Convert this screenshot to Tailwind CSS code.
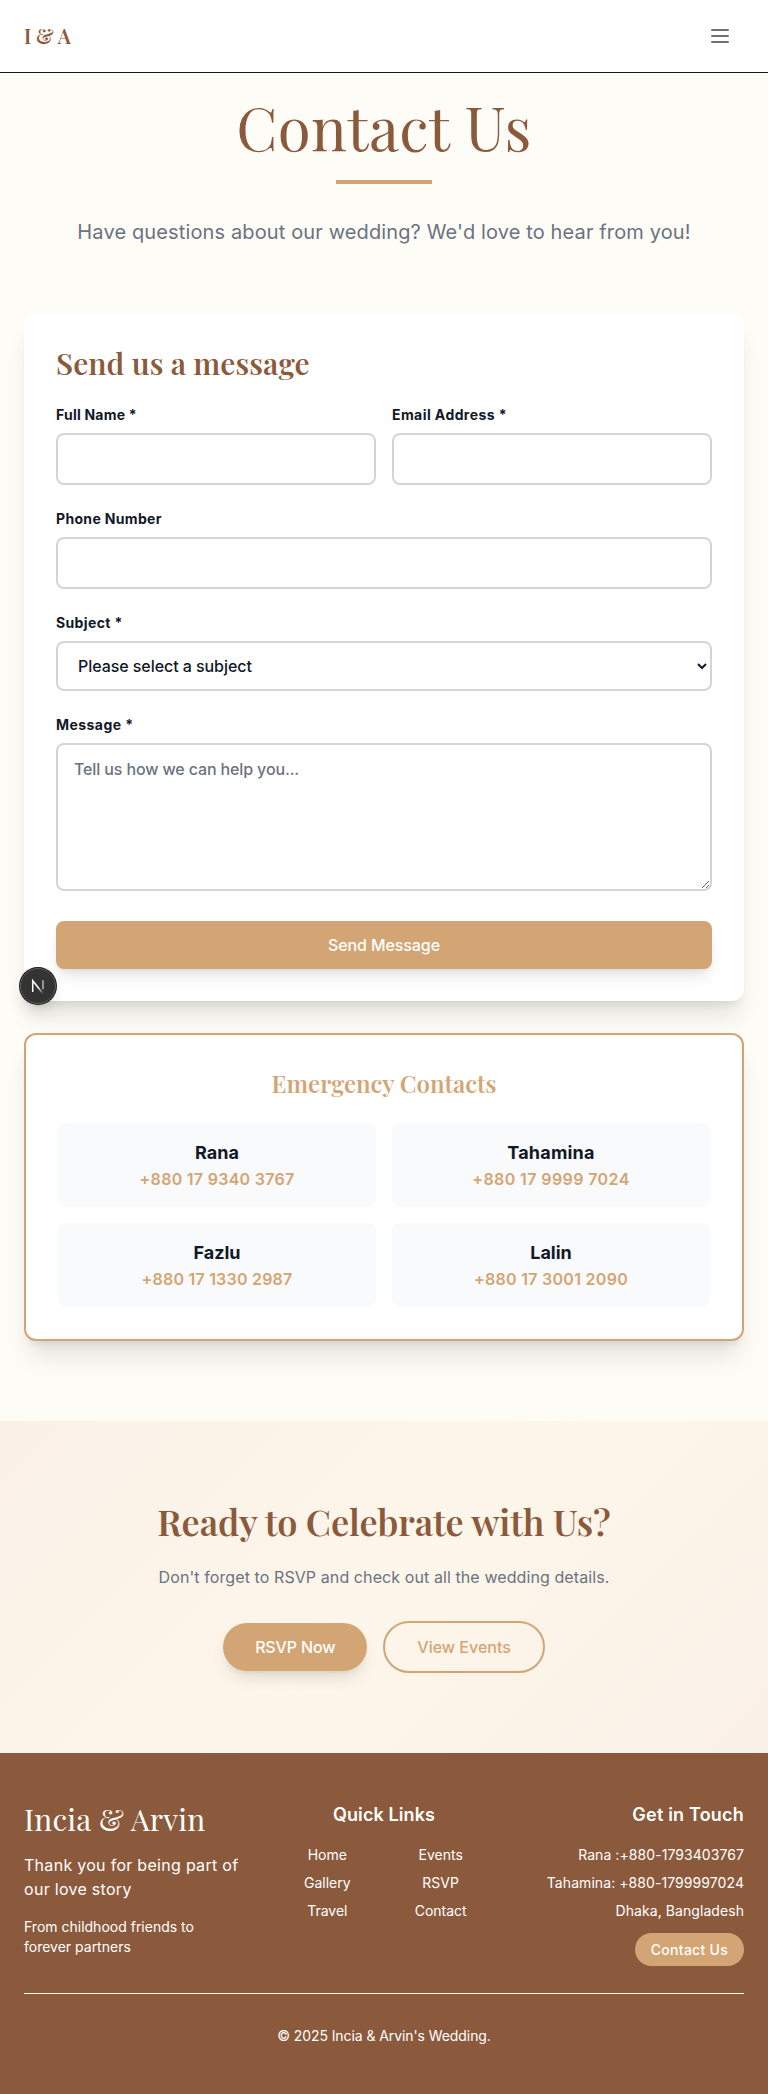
<!DOCTYPE html>
<html lang="en">
<head>
<meta charset="utf-8">
<title>Contact Us</title>
<script src="https://cdn.jsdelivr.net/npm/@tailwindcss/browser@4"></script>
</head>
<body class="relative bg-[#fefcf7] font-['Inter',sans-serif] text-[#111827]">
<header class="flex h-[73px] items-center justify-between border-b border-[#171717] bg-white px-6">
  <a class="font-['Playfair_Display','Liberation_Serif',serif] text-xl leading-7 font-semibold text-[#8b5a3c]">I &amp; A</a>
  <button class="p-3 text-[#6b7280]"><svg class="size-6" viewBox="0 0 24 24" fill="none" stroke="currentColor" stroke-width="2" stroke-linecap="round"><path d="M4 6h16M4 12h16M4 18h16"/></svg></button>
</header>
<main>
  <section class="px-6 pt-[23px] text-center">
    <h1 class="h-[60px] font-['Playfair_Display','Liberation_Serif',serif] text-6xl leading-[60px] tracking-[0.4px] text-[#8b5a3c]">Contact Us</h1>
    <div class="mx-auto mt-6 h-1 w-24 bg-[#d4a574]"></div>
    <p class="mt-8 h-[33px] text-xl leading-[32.5px] tracking-[0.13px] text-[#6b7280]">Have questions about our wedding? We'd love to hear from you!</p>
  </section>
  <section class="flex flex-col gap-8 px-6 pt-16 pb-20">
    <div class="h-[688px] rounded-xl bg-white p-8 shadow-xl">
      <h2 class="mb-6 font-['Playfair_Display','Liberation_Serif',serif] text-3xl leading-9 font-semibold tracking-[0.08px] text-[#8b5a3c]">Send us a message</h2>
      <form class="flex flex-col gap-6">
        <div class="grid grid-cols-2 gap-4">
          <div><label class="mb-2 block text-sm font-bold tracking-[0.22px]">Full Name *</label><input class="block h-[52px] w-full rounded-lg border-2 border-[#d1d5db] px-4"></div>
          <div><label class="mb-2 block text-sm font-bold tracking-[0.42px]">Email Address *</label><input class="block h-[52px] w-full rounded-lg border-2 border-[#d1d5db] px-4"></div>
        </div>
        <div><label class="mb-2 block text-sm font-bold tracking-[0.33px]">Phone Number</label><input class="block h-[52px] w-full rounded-lg border-2 border-[#d1d5db] px-4"></div>
        <div><label class="mb-2 block text-sm font-bold tracking-[0.37px]">Subject *</label><select class="block h-[50px] w-full rounded-lg border-2 border-[#d1d5db] bg-white px-4 py-3 font-medium tracking-[-0.06px]"><option>Please select a subject</option></select></div>
        <div><label class="mb-2 block text-sm font-bold tracking-[0.45px]">Message *</label><textarea class="mb-1.5 block h-[148px] w-full resize-y rounded-lg border-2 border-[#d1d5db] px-4 py-3 font-medium tracking-[-0.13px] placeholder:text-[#6b7280]" placeholder="Tell us how we can help you..."></textarea></div>
        <button type="button" class="h-12 rounded-lg bg-[#d4a574] font-medium tracking-[-0.1px] text-white shadow-lg">Send Message</button>
      </form>
    </div>
    <div class="rounded-xl border-2 border-[#d4a574] bg-white p-8 text-center shadow-xl">
      <h3 class="mb-6 font-['Playfair_Display','Liberation_Serif',serif] text-2xl leading-8 font-semibold text-[#d4a574]">Emergency Contacts</h3>
      <div class="grid grid-cols-2 gap-4">
        <div class="rounded-lg bg-[#f9fafb] p-4"><p class="text-lg leading-7 font-bold">Rana</p><p class="leading-6 font-semibold tracking-[0.28px] text-[#d4a574]">+880 17 9340 3767</p></div>
        <div class="rounded-lg bg-[#f9fafb] p-4"><p class="text-lg leading-7 font-bold tracking-[0.2px]">Tahamina</p><p class="leading-6 font-semibold tracking-[0.4px] text-[#d4a574]">+880 17 9999 7024</p></div>
        <div class="rounded-lg bg-[#f9fafb] p-4"><p class="text-lg leading-7 font-bold">Fazlu</p><p class="leading-6 font-semibold tracking-[0.22px] text-[#d4a574]">+880 17 1330 2987</p></div>
        <div class="rounded-lg bg-[#f9fafb] p-4"><p class="text-lg leading-7 font-bold">Lalin</p><p class="leading-6 font-semibold tracking-[0.28px] text-[#d4a574]">+880 17 3001 2090</p></div>
      </div>
    </div>
  </section>
  <section class="bg-[linear-gradient(135deg,#faf0e8,#fdf6ea_50%,#faf0e8)] px-6 py-20 text-center">
    <h2 class="font-['Playfair_Display','Liberation_Serif',serif] text-4xl leading-10 font-semibold tracking-[-0.08px] text-[#8b5a3c]">Ready to Celebrate with Us?</h2>
    <p class="mt-6 leading-6 tracking-[0.09px] text-[#6b7280]">Don't forget to RSVP and check out all the wedding details.</p>
    <div class="mt-8 flex items-center justify-center gap-4">
      <a class="rounded-full bg-[#d4a574] px-8 py-3 font-medium tracking-[-0.15px] text-white shadow-lg">RSVP Now</a>
      <a class="rounded-full border-2 border-[#d4a574] px-8 py-3 font-medium text-[#d4a574]">View Events</a>
    </div>
  </section>
</main>
<footer class="bg-[#8b5a3c] px-6 py-12 text-white">
  <div class="grid h-40 grid-cols-3 gap-8">
    <div>
      <h3 class="mb-4 font-['Playfair_Display','Liberation_Serif',serif] text-3xl leading-9 tracking-[0.2px] whitespace-nowrap">Incia &amp; Arvin</h3>
      <p class="mb-4 leading-6 tracking-[0.29px]">Thank you for being part of our love story</p>
      <p class="text-sm">From childhood friends to forever partners</p>
    </div>
    <div class="text-center">
      <h4 class="mb-4 text-lg leading-7 font-semibold tracking-[0.1px]">Quick Links</h4>
      <div class="grid grid-cols-2 gap-2 text-sm"><a>Home</a><a>Events</a><a>Gallery</a><a>RSVP</a><a>Travel</a><a>Contact</a></div>
    </div>
    <div class="flex flex-col items-end">
      <h4 class="mb-4 text-lg leading-7 font-semibold tracking-[0.2px]">Get in Touch</h4>
      <div class="flex flex-col items-end gap-2 text-sm tracking-[0.07px] whitespace-nowrap"><p>Rana :+880-1793403767</p><p>Tahamina: +880-1799997024</p><p>Dhaka, Bangladesh</p></div>
      <a class="mt-3 flex h-[33px] shrink-0 items-center rounded-full bg-[#d4a574] px-4 text-sm font-medium tracking-[0.28px]">Contact Us</a>
    </div>
  </div>
  <div class="mt-8 border-t border-white pt-8 text-center text-sm tracking-[-0.08px]">© 2025 Incia &amp; Arvin's Wedding.</div>
</footer>
<!-- Floating dev-tools badge -->
<div class="absolute top-[967px] left-[19px] size-[38px] rounded-full shadow-lg">
  <svg class="size-full" viewBox="0 0 38 38" fill="none">
    <defs>
      <linearGradient id="a" x1="20" y1="20" x2="25" y2="26" gradientUnits="userSpaceOnUse"><stop stop-color="#fff"/><stop offset="1" stop-color="#fff" stop-opacity="0"/></linearGradient>
      <linearGradient id="b" x1="24" y1="13" x2="24" y2="22" gradientUnits="userSpaceOnUse"><stop stop-color="#fff"/><stop offset="1" stop-color="#fff" stop-opacity="0"/></linearGradient>
    </defs>
    <circle cx="19" cy="19" r="19" fill="#1c1c1c"/><circle cx="19" cy="19" r="17.5" fill="#333" stroke="#606060"/>
    <path d="M13.7 25V13.7L24.3 27" stroke="url(#a)" stroke-width="1.5"/><path d="M24 13.3v9" stroke="#fff" stroke-opacity=".7" stroke-width="1.4"/>
  </svg>
</div>
</body>
</html>
